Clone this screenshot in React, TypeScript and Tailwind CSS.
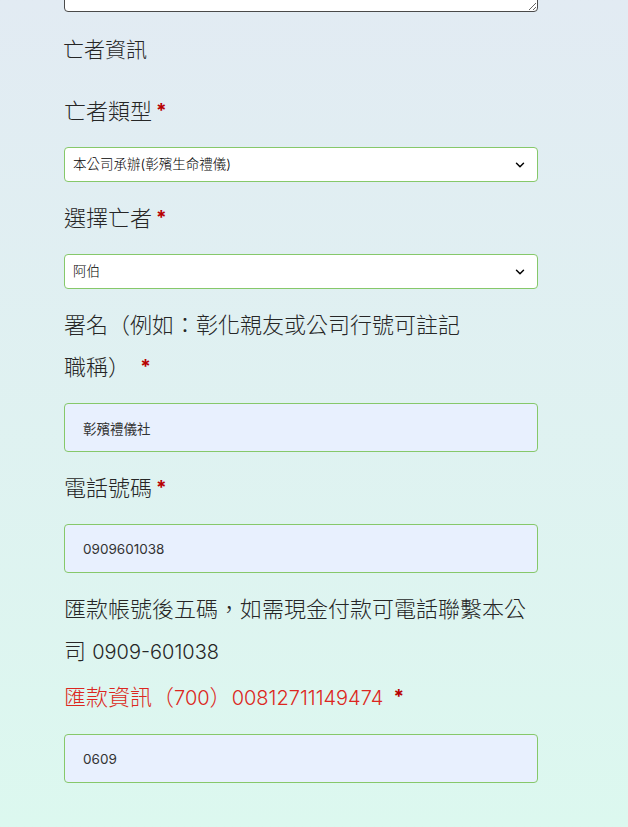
import { ChevronDown } from "lucide-react"

const font = "font-['Inter','Noto_Sans_CJK_TC',sans-serif]"

function Req() {
  return <span className="ml-1 align-[2px] text-[19px] font-bold text-[#b80000]">*</span>
}

function Label({ children, red }: { children: React.ReactNode; red?: boolean }) {
  return (
    <label
      className={`mb-[15px] block text-[22px] font-light leading-[42px] ${red ? "text-[#dc2620]" : "text-[#262626]"}`}
    >
      {children}
    </label>
  )
}

function Select({ value }: { value: string }) {
  return (
    <div className="relative mb-[15px]">
      <select
        defaultValue={value}
        className="h-[35px] w-full appearance-none rounded-[4px] border border-[#86c86a] bg-white pl-2 text-[13.5px] font-light text-black outline-none"
      >
        <option>{value}</option>
      </select>
      <ChevronDown
        className="pointer-events-none absolute right-[11px] top-[11px] h-[14px] w-[14px] text-black"
        strokeWidth={2.5}
      />
    </div>
  )
}

function Input({ value }: { value: string }) {
  return (
    <input
      defaultValue={value}
      className="mb-[15px] block h-[49px] w-full rounded-[4px] border border-[#86c86a] bg-[#e8f0fe] px-[18px] text-[13.5px] text-[#333] outline-none"
    />
  )
}

export default function App() {
  return (
    <div className={`min-h-[827px] bg-gradient-to-b from-[#e2ebf3] to-[#dcf8ef] ${font}`}>
      <form className="ml-[64px] w-[474px]">
        {/* textarea cut at top of the viewport */}
        <div className="flex h-[12px] items-end overflow-hidden">
          <textarea className="block h-[80px] w-full shrink-0 rounded-[4px] border border-[#4a4a4a] bg-white" />
        </div>

        <h3 className="mt-[17px] mb-[19px] -ml-px text-[21px] font-light leading-[42px] text-[#262626]">亡者資訊</h3>

        <Label>
          亡者類型<Req />
        </Label>
        <Select value="本公司承辦(彰殯生命禮儀)" />

        <Label>
          選擇亡者<Req />
        </Label>
        <Select value="阿伯" />

        <Label>
          署名（例如：彰化親友或公司行號可註記
          <br />
          職稱） <Req />
        </Label>
        <Input value="彰殯禮儀社" />

        <Label>
          電話號碼<Req />
        </Label>
        <Input value="0909601038" />

        <p className="text-[22px] font-light leading-[42px] text-[#262626]">
          匯款帳號後五碼，如需現金付款可電話聯繫本公
          <br />
          司 <span className="text-[20px]">0909-601038</span>
        </p>

        <div className="mt-[3px]">
          <Label red>
            匯款資訊（<span className="text-[20px]">700</span>）<span className="text-[20px]">00812711149474</span> <Req />
          </Label>
        </div>
        <Input value="0609" />
      </form>
    </div>
  )
}
